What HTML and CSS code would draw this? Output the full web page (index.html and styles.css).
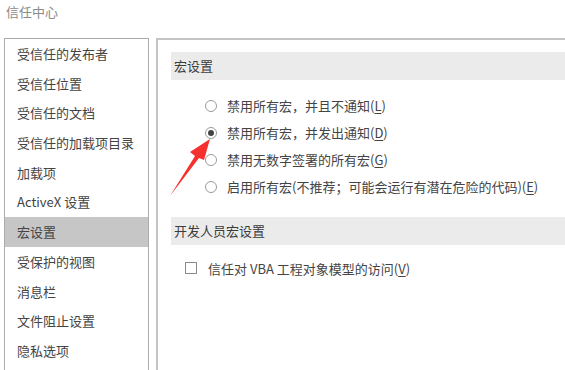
FILE: index.html
```html
<!DOCTYPE html>
<html lang="zh-CN">
<head>
<meta charset="utf-8">
<title>信任中心</title>
<link rel="stylesheet" href="styles.css">
</head>
<body>
<div class="title">信任中心</div>
<div class="main">
  <ul class="nav">
    <li>受信任的发布者</li>
    <li>受信任位置</li>
    <li>受信任的文档</li>
    <li>受信任的加载项目录</li>
    <li>加载项</li>
    <li>ActiveX 设置</li>
    <li class="active">宏设置</li>
    <li>受保护的视图</li>
    <li>消息栏</li>
    <li>文件阻止设置</li>
    <li>隐私选项</li>
  </ul>
  <div class="content">
    <div class="section-head">宏设置</div>
    <div class="options">
      <div class="opt"><span class="radio"></span><span>禁用所有宏，并且不通知(<u>L</u>)</span></div>
      <div class="opt"><span class="radio checked"></span><span>禁用所有宏，并发出通知(<u>D</u>)</span></div>
      <div class="opt"><span class="radio"></span><span>禁用无数字签署的所有宏(<u>G</u>)</span></div>
      <div class="opt"><span class="radio"></span><span>启用所有宏(不推荐；可能会运行有潜在危险的代码)(<u>E</u>)</span></div>
    </div>
    <div class="section-head second">开发人员宏设置</div>
    <div class="check-row"><span class="check"></span><span>信任对 VBA 工程对象模型的访问(<u>V</u>)</span></div>
  </div>
</div>
<svg class="arrow" width="565" height="370" viewBox="0 0 565 370">
  <polygon points="170,196 195,156 190,152 210,139 204,160 199,158" fill="#f5302f"/>
</svg>
</body>
</html>
```
FILE: styles.css
```css
html, body {
  margin: 0;
  padding: 0;
  background: #ffffff;
  width: 565px;
  height: 370px;
  overflow: hidden;
  font-family: "Noto Sans CJK SC", "Noto Sans", sans-serif;
  font-size: 13px;
  color: #444444;
  position: relative;
}
.title {
  height: 24px;
  line-height: 24px;
  padding-left: 6px;
  color: #8a8a8a;
  font-size: 13px;
  margin-bottom: 14px;
}
.main {
  display: flex;
  gap: 7px;
  padding-left: 4px;
  align-items: flex-start;
}
.nav {
  list-style: none;
  margin: 0;
  padding: 0;
  width: 143px;
  height: 340px;
  border: 1px solid #ababab;
  border-bottom: none;
}
.nav li {
  height: 29.7px;
  line-height: 29.7px;
  padding-left: 12px;
  white-space: nowrap;
}
.nav li.active {
  background: #c6c6c6;
}
.content {
  flex: 1;
  height: 340px;
  border-top: 2px solid #c4c4c4;
  border-left: 2px solid #c4c4c4;
  padding-left: 13px;
}
.section-head {
  margin-top: 12px;
  height: 28px;
  line-height: 28px;
  background: #ebebeb;
  padding-left: 3px;
  color: #3c3c3c;
}
.section-head.second {
  margin-top: 17px;
}
.options {
  padding-top: 12px;
  padding-left: 34px;
}
.opt {
  height: 27px;
  display: flex;
  align-items: center;
  gap: 10px;
  white-space: nowrap;
}
.radio {
  width: 10px;
  height: 10px;
  border: 1px solid #9a9a9a;
  border-radius: 50%;
  display: flex;
  align-items: center;
  justify-content: center;
  flex: none;
}
.radio.checked::after {
  content: "";
  width: 6px;
  height: 6px;
  border-radius: 50%;
  background: #444;
}
.check-row {
  height: 26px;
  margin-top: 10px;
  display: flex;
  align-items: center;
  gap: 11px;
  padding-left: 14px;
  white-space: nowrap;
}
.check {
  width: 10px;
  height: 10px;
  border: 1px solid #8a8a8a;
  flex: none;
}
u {
  text-underline-offset: 2px;
}
.arrow {
  position: absolute;
  left: 0;
  top: 0;
  pointer-events: none;
}
```
